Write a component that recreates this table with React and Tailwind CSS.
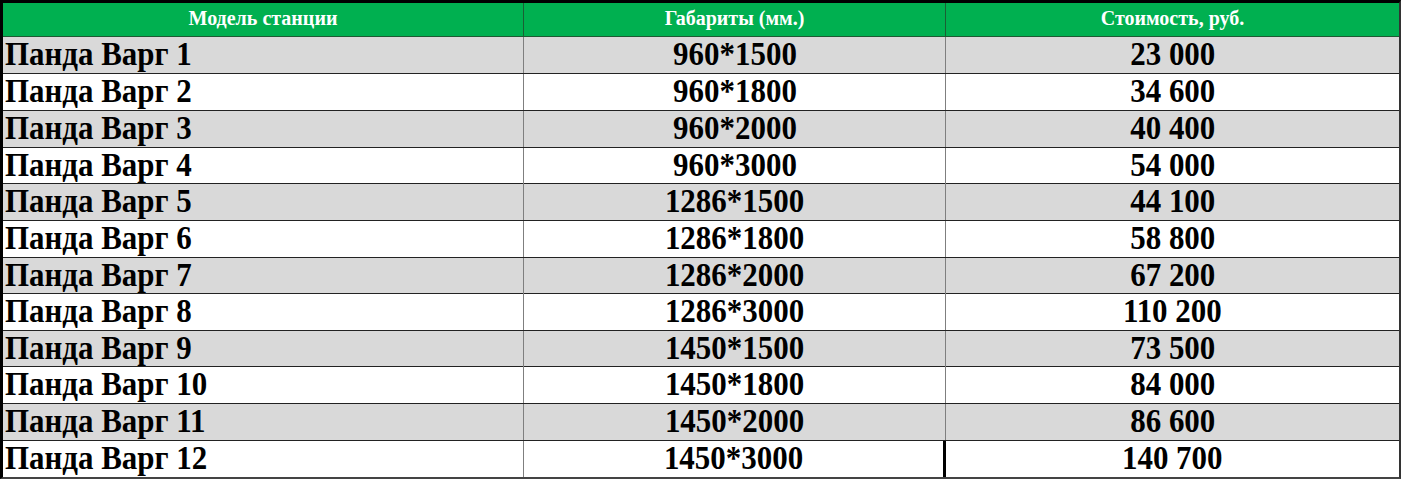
const rows = [
  ["Панда Варг 1", "960*1500", "23 000", "h-[37px]"],
  ["Панда Варг 2", "960*1800", "34 600", "h-[37px]"],
  ["Панда Варг 3", "960*2000", "40 400", "h-[37px]"],
  ["Панда Варг 4", "960*3000", "54 000", "h-[36px]"],
  ["Панда Варг 5", "1286*1500", "44 100", "h-[37px]"],
  ["Панда Варг 6", "1286*1800", "58 800", "h-[37px]"],
  ["Панда Варг 7", "1286*2000", "67 200", "h-[36px]"],
  ["Панда Варг 8", "1286*3000", "110 200", "h-[37px]"],
  ["Панда Варг 9", "1450*1500", "73 500", "h-[36px]"],
  ["Панда Варг 10", "1450*1800", "84 000", "h-[37px]"],
  ["Панда Варг 11", "1450*2000", "86 600", "h-[37px]"],
  ["Панда Варг 12", "1450*3000", "140 700", "h-[36px]"],
];

export default function App() {
  return (
    <div className="bg-white w-[1402px] h-[479px]">
      <div className="w-[1401px] border-t-[3px] border-l-[3px] border-r-2 border-b-2 border-l-black border-t-black border-r-[#333] border-b-[#444] font-['Liberation_Serif','Times_New_Roman',serif] font-bold">
        <div className="grid grid-cols-[521px_422px_1fr] h-[34px] bg-[#00b050] border-b border-b-[#1e5a33] text-white text-[20px] leading-none">
          <div className="flex items-center justify-center border-r border-r-[#1b5e34] pb-[4px]">Модель станции</div>
          <div className="flex items-center justify-center border-r border-r-[#1b5e34] pb-[4px]">Габариты (мм.)</div>
          <div className="flex items-center justify-center pb-[4px]">Стоимость, руб.</div>
        </div>
        {rows.map((r, i) => (
          <div
            key={i}
            className={`grid grid-cols-[521px_422px_1fr] ${r[3]} ${i < rows.length - 1 ? "border-b border-b-[#222]" : ""} ${i % 2 === 0 ? "bg-[#d9d9d9]" : "bg-white"} text-black text-[34px] leading-none`}
          >
            <div className="flex items-center pl-[2px] pb-[2px] border-r border-r-[#7f7f7f] whitespace-nowrap">
              <span className="inline-block origin-left scale-x-[0.91]">{r[0]}</span>
            </div>
            <div className={`flex items-center justify-center pb-[2px] ${i === rows.length - 1 ? "border-r-[3px] border-r-black" : "border-r border-r-[#7f7f7f]"} whitespace-nowrap`}>
              <span className="inline-block scale-x-[0.91]">{r[1]}</span>
            </div>
            <div className="flex items-center justify-center pb-[2px] whitespace-nowrap">
              <span className="inline-block scale-x-[0.91]">{r[2]}</span>
            </div>
          </div>
        ))}
      </div>
    </div>
  );
}
